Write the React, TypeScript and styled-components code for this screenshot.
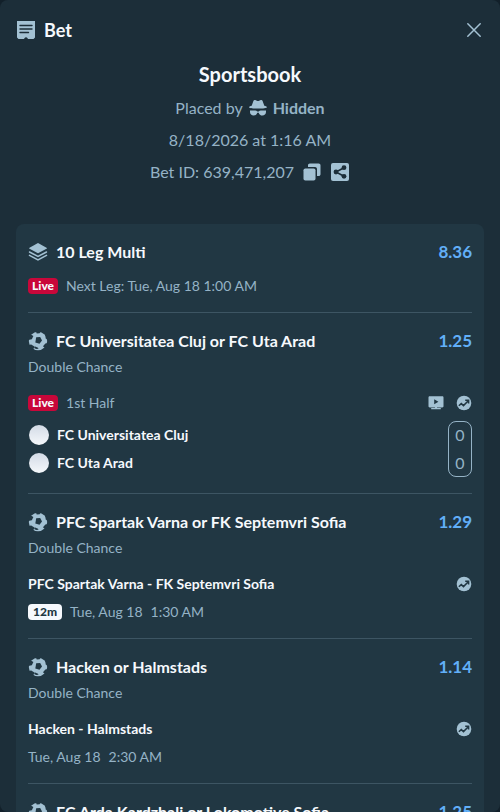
import React from "react";
import styled, { createGlobalStyle, css } from "styled-components";

const color = {
  backdrop: "#12202a",
  modal: "#1c2e39",
  card: "#213743",
  line: "#3d5563",
  text: "#95b3c6",
  icon: "#a3c1d3",
  white: "#f6f9fd",
  blue: "#62aff8",
  live: "#c9073a",
};

const GlobalStyle = createGlobalStyle`
  *, *::before, *::after { box-sizing: border-box; }
  body {
    margin: 0;
    background: ${color.backdrop};
    color: ${color.text};
    font-family: Lato, "Liberation Sans", sans-serif;
    font-size: 14px;
    line-height: 20px;
  }
  h1, h2, h3, p { margin: 0; font: inherit; }
  svg { display: block; flex: none; }
`;

const Modal = styled.main`
  height: 100vh;
  overflow-y: auto;
  scrollbar-width: none;
  background: ${color.modal};
  border-radius: 8px;
  padding: 16px;
`;

const Header = styled.header`
  display: flex;
  align-items: center;
  justify-content: space-between;
  height: 28px;
`;

const HeaderTitle = styled.h1`
  && {
    display: flex;
    align-items: center;
    gap: 8px;
    color: ${color.white};
    font-size: 18px;
    font-weight: 700;
  }
`;

const IconButton = styled.button`
  display: inline-flex;
  padding: 0;
  border: 0;
  background: none;
  color: ${color.icon};
  cursor: pointer;
`;

const Intro = styled.section`
  display: flex;
  flex-direction: column;
  align-items: center;
  gap: 8px;
  padding: 18px 0 40px;
  font-size: 16px;
  line-height: 24px;
`;

const IntroTitle = styled.h2`
  && {
    margin-bottom: 2px;
    color: ${color.white};
    font-size: 20px;
    font-weight: 700;
  }
`;

const IntroLine = styled.p<{ $gap?: number }>`
  && {
    display: flex;
    align-items: center;
    gap: ${({ $gap = 5 }) => $gap}px;
  }
`;

const Card = styled.section`
  background: ${color.card};
  border-radius: 8px;
  padding: 0 12px;
`;

const Leg = styled.article`
  padding: 16px 0;
  & + & { border-top: 1px solid ${color.line}; }
`;

const TitleRow = styled.div`
  display: flex;
  align-items: center;
  justify-content: space-between;
  font-size: 16px;
  line-height: 24px;
  font-weight: 700;
`;

const LegTitle = styled.h3`
  && {
    display: flex;
    align-items: center;
    gap: 8px;
    color: ${color.white};
    font-weight: 700;
  }
`;

const Odds = styled.span`
  color: ${color.blue};
  font-size: 17px;
`;

const Market = styled.p`
  && { margin: 4px 0 16px; }
`;

const InfoRow = styled.div<{ $top?: number }>`
  display: flex;
  align-items: center;
  gap: 8px;
  height: 20px;
  margin-top: ${({ $top = 0 }) => $top}px;
`;

const Actions = styled.div`
  display: flex;
  gap: 12px;
  margin-left: auto;
`;

const Badge = styled.span<{ $live?: boolean }>`
  border-radius: 4px;
  font-size: 12px;
  line-height: 16px;
  font-weight: 900;
  ${({ $live }) =>
    $live
      ? css`padding: 0 4px; background: ${color.live}; color: ${color.white};`
      : css`padding: 0 5px; background: ${color.white}; color: ${color.card};`}
`;

const Strong = styled.span`
  color: ${color.white};
  font-weight: 700;
`;

const Scoreboard = styled.div`
  display: flex;
  justify-content: space-between;
  margin-top: 8px;
`;

const Teams = styled.div`
  display: grid;
  grid-auto-rows: 28px;
`;

const Team = styled.div`
  display: flex;
  align-items: center;
  gap: 8px;
`;

const Crest = styled.span`
  width: 20px;
  height: 20px;
  margin-left: 1px;
  border-radius: 50%;
  background: linear-gradient(#d3dbe6, #f5f8fb);
`;

const Scores = styled.div`
  display: grid;
  grid-template-rows: 28px 28px;
  align-content: center;
  place-items: center;
  width: 24px;
  height: 56px;
  border: 1px solid ${color.text};
  border-radius: 8px;
  font-size: 16px;
`;

const TicketIcon = () => (
  <svg width="20" height="20" viewBox="0 0 20 20" fill={color.icon} aria-hidden="true">
    <path d="M1 1h18v16.500l-1.500 1.500h-5.500l-.6-1a1.600 1.600 0 0 0-2.800 0l-.6 1H2.500L1 17.500z" />
    <path d="M4 5.500h12M4 9h12M4 12.500h8.500" stroke={color.modal} strokeWidth="1.400" strokeLinecap="round" />
  </svg>
);

const CloseIcon = () => (
  <svg width="20" height="20" viewBox="0 0 20 20" fill="none" stroke="currentColor" strokeWidth="1.500" strokeLinecap="round" aria-hidden="true">
    <path d="M3.800 3.800l12.400 12.400M16.200 3.800L3.800 16.200" />
  </svg>
);

const HiddenIcon = () => (
  <svg width="20" height="20" viewBox="0 0 20 20" fill={color.icon} aria-hidden="true">
    <path d="M3.700 7.700 5.400 3c.3-.8 1-1.200 1.800-.9l1.700.6c.7.300 1.500.3 2.200 0l1.700-.6c.8-.3 1.500.1 1.800.9l1.700 4.700c1.600.4 2.700.9 2.700 1.500 0 .8-4 1.400-9 1.400s-9-.6-9-1.400c0-.6 1.100-1.100 2.700-1.500z" />
    <path d="M2 12.400h5.300c.8 0 1.500.4 1.900 1h1.600c.4-.6 1.100-1 1.900-1H18v1.700c0 2-1.600 3.500-3.600 3.500-1.800 0-3.300-1.200-3.600-2.900H9.200c-.3 1.700-1.800 2.900-3.600 2.900-2 0-3.600-1.500-3.600-3.500z" />
  </svg>
);

const CopyIcon = () => (
  <svg width="20" height="20" viewBox="0 0 20 20" fill="currentColor" aria-hidden="true">
    <rect x="1.500" y="6.500" width="12" height="12" rx="1.800" />
    <path d="M6 3.300c0-1 .8-1.800 1.800-1.800h8.900c1 0 1.800.8 1.800 1.800v8.900c0 1-.8 1.800-1.800 1.800h-1.700V7c0-1.100-.9-2-2-2H6z" />
  </svg>
);

const ShareIcon = () => (
  <svg width="20" height="20" viewBox="0 0 20 20" aria-hidden="true">
    <rect x="1" y="1" width="18" height="18" rx="2" fill="currentColor" />
    <path d="M14 5.800 6 10l8 4.200" fill="none" stroke={color.modal} strokeWidth="1.600" />
    <g fill={color.modal}>
      <circle cx="14" cy="5.700" r="2.400" />
      <circle cx="6" cy="10" r="2.400" />
      <circle cx="14" cy="14.300" r="2.400" />
    </g>
  </svg>
);

const LayersIcon = () => (
  <svg width="20" height="20" viewBox="0 0 20 20" fill={color.icon} aria-hidden="true">
    <path d="M10 1l8.500 4.700c.5.300.5.800 0 1.100L10 11.300 1.500 6.800c-.5-.3-.5-.8 0-1.100z" />
    <path d="M1.500 10 10 14.500l8.500-4.500M1.500 13.400 10 18l8.500-4.600" fill="none" stroke={color.icon} strokeWidth="1.500" strokeLinecap="round" />
  </svg>
);

const SoccerIcon = () => (
  <svg width="20" height="20" viewBox="0 0 20 20" aria-hidden="true">
    <circle cx="10" cy="10" r="9.200" fill={color.icon} />
    <g fill={color.card}>
      <path d="M8.200 6.200 12.200 6 14 9.500 11.500 12.800 7.300 11.500z" />
      <path d="M0 3.500 3.300 3.800 5.400 5 3.800 8.300 0 9z" />
      <path d="M7.800 0 12.800 0 11.700 2.300 8.700 2.400z" />
      <path d="M17.200 3 20 6 20 8.500 17.700 7.500z" />
      <path d="M20 12 17.400 12.400 15 15.200 17.300 17.500z" />
      <path d="M7.200 15.500 10 16.800 10.500 17.800 8 18 6.500 17z" />
      <path d="M0 14 3.200 13.500 6.800 15.800 6.600 17 4 18.500z" />
    </g>
  </svg>
);

const StreamIcon = () => (
  <svg width="16" height="16" viewBox="0 0 16 16" fill="currentColor" aria-hidden="true">
    <path d="M1.700 1.300h12.600c.7 0 1.200.5 1.200 1.200v8.700c0 .7-.5 1.200-1.200 1.200H9v.7h3.800v1.200H3.200v-1.200H7v-.7H1.700c-.7 0-1.200-.5-1.200-1.200V2.500c0-.7.5-1.200 1.200-1.200z" />
    <path d="M6.200 4.300v5l4.200-2.500z" fill={color.card} />
  </svg>
);

const TrendIcon = () => (
  <svg width="16" height="16" viewBox="0 0 16 16" aria-hidden="true">
    <circle cx="8" cy="8" r="7.300" fill="currentColor" />
    <path d="M2.800 10.800 5.300 8.600l2.200 2 4.300-4.400M9.200 5.200h3.400v3.400" fill="none" stroke={color.card} strokeWidth="1.500" />
  </svg>
);

type LegData = {
  pick: string;
  odds: string;
  match?: string;
  date?: string;
  time?: string;
  soon?: string;
  period?: string;
  teams?: { name: string; score: number }[];
};

const legs: LegData[] = [
  {
    pick: "FC Universitatea Cluj or FC Uta Arad",
    odds: "1.25",
    period: "1st Half",
    teams: [
      { name: "FC Universitatea Cluj", score: 0 },
      { name: "FC Uta Arad", score: 0 },
    ],
  },
  {
    pick: "PFC Spartak Varna or FK Septemvri Sofia",
    odds: "1.29",
    match: "PFC Spartak Varna - FK Septemvri Sofia",
    soon: "12m",
    date: "Tue, Aug 18",
    time: "1:30 AM",
  },
  {
    pick: "Hacken or Halmstads",
    odds: "1.14",
    match: "Hacken - Halmstads",
    date: "Tue, Aug 18",
    time: "2:30 AM",
  },
  { pick: "FC Arda Kardzhali or Lokomotive Sofia", odds: "1.25" },
];

const StatsButton = () => (
  <IconButton type="button" aria-label="Match statistics">
    <TrendIcon />
  </IconButton>
);

const BetLeg = ({ leg }: { leg: LegData }) => (
  <Leg>
    <TitleRow>
      <LegTitle>
        <SoccerIcon />
        {leg.pick}
      </LegTitle>
      <Odds>{leg.odds}</Odds>
    </TitleRow>
    <Market>Double Chance</Market>
    {leg.teams && (
      <>
        <InfoRow>
          <Badge $live>Live</Badge>
          {leg.period}
          <Actions>
            <IconButton type="button" aria-label="Watch stream">
              <StreamIcon />
            </IconButton>
            <StatsButton />
          </Actions>
        </InfoRow>
        <Scoreboard>
          <Teams>
            {leg.teams.map((team) => (
              <Team key={team.name}>
                <Crest />
                <Strong>{team.name}</Strong>
              </Team>
            ))}
          </Teams>
          <Scores>
            {leg.teams.map((team) => (
              <span key={team.name}>{team.score}</span>
            ))}
          </Scores>
        </Scoreboard>
      </>
    )}
    {leg.match && (
      <>
        <InfoRow>
          <Strong>{leg.match}</Strong>
          <Actions>
            <StatsButton />
          </Actions>
        </InfoRow>
        <InfoRow $top={8}>
          {leg.soon && <Badge>{leg.soon}</Badge>}
          <span>{leg.date}</span>
          <span>{leg.time}</span>
        </InfoRow>
      </>
    )}
  </Leg>
);

export default function App() {
  return (
    <>
      <GlobalStyle />
      <Modal>
        <Header>
          <HeaderTitle>
            <TicketIcon />
            Bet
          </HeaderTitle>
          <IconButton type="button" aria-label="Close">
            <CloseIcon />
          </IconButton>
        </Header>
        <Intro>
          <IntroTitle>Sportsbook</IntroTitle>
          <IntroLine>
            Placed by <HiddenIcon /> <b>Hidden</b>
          </IntroLine>
          <IntroLine>8/18/2026 at 1:16 AM</IntroLine>
          <IntroLine $gap={8}>
            Bet ID: 639,471,207
            <IconButton type="button" aria-label="Copy bet ID">
              <CopyIcon />
            </IconButton>
            <IconButton type="button" aria-label="Share bet">
              <ShareIcon />
            </IconButton>
          </IntroLine>
        </Intro>
        <Card>
          <Leg>
            <TitleRow>
              <LegTitle>
                <LayersIcon />
                10 Leg Multi
              </LegTitle>
              <Odds>8.36</Odds>
            </TitleRow>
            <InfoRow $top={12}>
              <Badge $live>Live</Badge>
              Next Leg: Tue, Aug 18 1:00 AM
            </InfoRow>
          </Leg>
          {legs.map((leg) => (
            <BetLeg key={leg.pick} leg={leg} />
          ))}
        </Card>
      </Modal>
    </>
  );
}
